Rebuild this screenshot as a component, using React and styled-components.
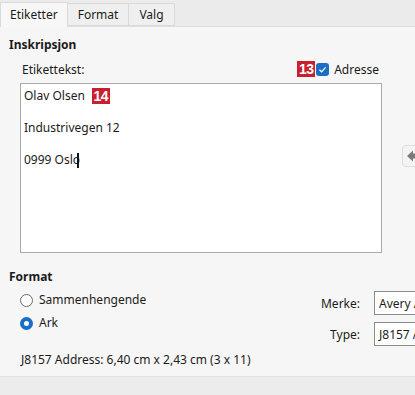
import React from "react";
import styled, { createGlobalStyle } from "styled-components";

const GlobalStyle = createGlobalStyle`
  html, body {
    margin: 0;
    padding: 0;
    background: #ececec;
  }
  body {
    font-family: "Noto Sans", "Open Sans", sans-serif;
    font-size: 12px;
    color: #1b1b1b;
  }
`;

const Window = styled.div`
  width: 415px;
  height: 395px;
  overflow: hidden;
  display: flex;
  flex-direction: column;
  background: #ececec;
`;

const TabBar = styled.div`
  height: 27px;
  flex-shrink: 0;
  display: flex;
  align-items: flex-end;
  background: #ebebeb;
  border-bottom: 1px solid #dedede;
  box-sizing: border-box;
`;

const Tab = styled.div`
  box-sizing: border-box;
  height: ${({ $active }) => ($active ? "25px" : "23px")};
  margin-bottom: ${({ $active }) => ($active ? "-1px" : "0")};
  padding: 0 ${({ $active }) => ($active ? "9px" : "10px")};
  display: flex;
  align-items: center;
  line-height: 16px;
  font-size: 12px;
  background: ${({ $active }) => ($active ? "#f7f7f7" : "#efefef")};
  border: 1px solid #dadada;
  border-bottom: ${({ $active }) => ($active ? "none" : "1px solid #dadada")};
  margin-right: -1px;
`;

const Panel = styled.div`
  height: 350px;
  flex-shrink: 0;
  box-sizing: border-box;
  background: #f6f6f6;
  padding: 10px 0 0 9px;
  display: flex;
  flex-direction: column;
  border-bottom: 1px solid #e2e2e2;
`;

const SectionTitle = styled.div`
  font-weight: 700;
  line-height: 16px;
  margin-top: ${({ $gap }) => $gap || 0}px;
`;

const LabelRow = styled.div`
  display: flex;
  align-items: center;
  justify-content: space-between;
  margin: 8px 0 0 13px;
  width: 357px;
  height: 16px;
`;

const CheckWrap = styled.label`
  display: flex;
  align-items: center;
  gap: 5px;
`;

const Badge = styled.span`
  display: inline-flex;
  align-items: center;
  justify-content: center;
  height: 16px;
  min-width: 18px;
  padding: 0 1px;
  box-sizing: border-box;
  background: #c8202f;
  color: #fff;
  font-family: "Liberation Sans", Arial, sans-serif;
  font-weight: 700;
  font-size: 14px;
  letter-spacing: -0.5px;
  line-height: 16px;
`;

const Check = styled.span`
  width: 13px;
  height: 13px;
  border-radius: 3px;
  background: #1a6ec6;
  display: inline-flex;
  align-items: center;
  justify-content: center;
  margin-left: -4px;
`;

const EditorRow = styled.div`
  display: flex;
  align-items: flex-start;
  margin: 6px 0 0 11px;
`;

const TextBox = styled.div`
  width: 362px;
  height: 170px;
  flex-shrink: 0;
  box-sizing: border-box;
  background: #fff;
  border: 1px solid #a9a9a9;
  padding: 4px 3px;
  line-height: 16px;
`;

const Line = styled.div`
  height: 16px;
  display: flex;
  align-items: center;
  gap: 7px;
  white-space: nowrap;
`;

const Caret = styled.span`
  display: inline-block;
  width: 2px;
  height: 15px;
  background: #111;
  margin-left: -3px;
  vertical-align: middle;
`;

const SideButton = styled.div`
  margin: 62px 0 0 20px;
  width: 22px;
  height: 22px;
  box-sizing: border-box;
  border: 1px solid #dedede;
  border-radius: 4px;
  background: #f4f4f4;
  display: flex;
  align-items: center;
  padding-left: 3px;
  flex-shrink: 0;
`;

const FormatGrid = styled.div`
  display: flex;
  margin-top: 7px;
`;

const RadioColumn = styled.div`
  display: flex;
  flex-direction: column;
  gap: 7px;
  padding-left: 11px;
  width: 271px;
  flex-shrink: 0;
`;

const RadioRow = styled.label`
  display: flex;
  align-items: center;
  gap: 6px;
  height: 16px;
  line-height: 16px;
`;

const Radio = styled.span`
  width: 13px;
  height: 13px;
  box-sizing: border-box;
  border-radius: 50%;
  border: ${({ $on }) => ($on ? "4px solid #1a6ec6" : "1px solid #6b6b6b")};
  background: #fff;
`;

const FieldColumn = styled.div`
  display: grid;
  grid-template-columns: 69px 120px;
  column-gap: 14px;
  row-gap: 7px;
  margin-top: -1px;
  flex-shrink: 0;
`;

const FieldLabel = styled.div`
  text-align: right;
  align-self: center;
`;

const FieldInput = styled.div`
  height: 24px;
  box-sizing: border-box;
  border: 1px solid #8c8c8c;
  background: #fff;
  padding: 0 4px;
  display: flex;
  align-items: center;
  white-space: nowrap;
  overflow: hidden;
`;

const Info = styled.div`
  margin: 6px 0 0 12px;
  line-height: 16px;
`;

const StatusStrip = styled.div`
  flex: 1;
  background: #ececec;
`;

export default function App() {
  return (
    <>
      <GlobalStyle />
      <Window>
        <TabBar>
          <Tab $active>Etiketter</Tab>
          <Tab>Format</Tab>
          <Tab>Valg</Tab>
        </TabBar>
        <Panel>
          <SectionTitle>Inskripsjon</SectionTitle>
          <LabelRow>
            <span>Etikettekst:</span>
            <CheckWrap>
              <Badge>13</Badge>
              <Check>
                <svg width="9" height="9" viewBox="0 0 9 9">
                  <path d="M1.5 4.8 L3.6 6.8 L7.6 2.4" fill="none" stroke="#fff" strokeWidth="1.2" />
                </svg>
              </Check>
              <span>Adresse</span>
            </CheckWrap>
          </LabelRow>
          <EditorRow>
            <TextBox>
              <Line>
                <span>Olav Olsen</span>
                <Badge>14</Badge>
              </Line>
              <Line />
              <Line>Industrivegen 12</Line>
              <Line />
              <Line>
                <span>
                  0999 Oslo<Caret />
                </span>
              </Line>
            </TextBox>
            <SideButton>
              <svg width="14" height="14" viewBox="0 0 14 14">
                <path d="M1 7 L7 1.5 L7 4.5 L13 4.5 L13 9.5 L7 9.5 L7 12.5 Z" fill="#7a7a7a" />
              </svg>
            </SideButton>
          </EditorRow>
          <SectionTitle $gap={16}>Format</SectionTitle>
          <FormatGrid>
            <RadioColumn>
              <RadioRow>
                <Radio />
                Sammenhengende
              </RadioRow>
              <RadioRow>
                <Radio $on />
                Ark
              </RadioRow>
            </RadioColumn>
            <FieldColumn>
              <FieldLabel>Merke:</FieldLabel>
              <FieldInput>Avery A4</FieldInput>
              <FieldLabel>Type:</FieldLabel>
              <FieldInput>J8157 Address</FieldInput>
            </FieldColumn>
          </FormatGrid>
          <Info>J8157 Address: 6,40 cm x 2,43 cm (3 x 11)</Info>
        </Panel>
        <StatusStrip />
      </Window>
    </>
  );
}
